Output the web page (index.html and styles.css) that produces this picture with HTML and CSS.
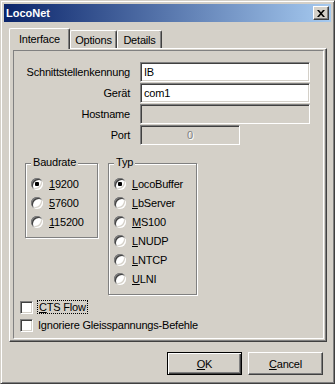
FILE: index.html
```html
<!DOCTYPE html>
<html lang="de">
<head>
    <meta charset="UTF-8">
    <title>LocoNet</title>
    <link rel="stylesheet" href="styles.css">
</head>
<body>
    <div class="window">
        <div class="titlebar">
            <span class="title">LocoNet</span>
            <span class="close-btn">
                <svg width="8" height="7" viewBox="0 0 8 7"><path d="M0 0h2l2 2.2 2-2.2h2l-3 3.5 3 3.5h-2l-2-2.2-2 2.2h-2l3-3.5z" fill="#000"/></svg>
            </span>
        </div>

        <div class="tab-strip">
            <div class="tab active">Interface</div>
            <div class="tab">Options</div>
            <div class="tab">Details</div>
        </div>
        <div class="tab-page">
            <div class="page-inner">
                <div class="fields">
                    <label>Schnittstellenkennung</label>
                    <div class="field">IB</div>
                    <label>Gerät</label>
                    <div class="field">com1</div>
                    <label>Hostname</label>
                    <div class="field disabled"></div>
                    <label>Port</label>
                    <div class="field disabled port">0</div>
                </div>

                <div class="groups">
                    <div class="group baud">
                        <span class="group-title">Baudrate</span>
                        <div class="option"><span class="radio checked"></span><span><u>1</u>9200</span></div>
                        <div class="option"><span class="radio"></span><span><u>5</u>7600</span></div>
                        <div class="option"><span class="radio"></span><span><u>1</u>15200</span></div>
                    </div>
                    <div class="group typ">
                        <span class="group-title">Typ</span>
                        <div class="option"><span class="radio checked"></span><span><u>L</u>ocoBuffer</span></div>
                        <div class="option"><span class="radio"></span><span><u>L</u>bServer</span></div>
                        <div class="option"><span class="radio"></span><span><u>M</u>S100</span></div>
                        <div class="option"><span class="radio"></span><span><u>L</u>NUDP</span></div>
                        <div class="option"><span class="radio"></span><span><u>L</u>NTCP</span></div>
                        <div class="option"><span class="radio"></span><span><u>U</u>LNI</span></div>
                    </div>
                </div>

                <div class="checks">
                    <div class="check-row"><span class="checkbox"></span><span class="focus"><u>C</u>TS Flow</span></div>
                    <div class="check-row"><span class="checkbox"></span><span>Ignoriere Gleisspannungs-Befehle</span></div>
                </div>
            </div>
        </div>

        <div class="buttons">
            <div class="button default"><u>O</u>K</div>
            <div class="button"><u>C</u>ancel</div>
        </div>
    </div>
</body>
</html>
```

FILE: styles.css
```css
body {
    margin: 0;
    padding: 0;
    background-color: #d4d0c8;
    font-family: "Liberation Sans", Arial, sans-serif;
    font-size: 11px;
    letter-spacing: -0.2px;
    color: #000;
}
u {
    text-decoration: underline;
    text-underline-offset: 1px;
}
.window {
    width: 335px;
    height: 384px;
    box-sizing: border-box;
    background-color: #d4d0c8;
    border: 1px solid;
    border-color: #d4d0c8 #404040 #404040 #d4d0c8;
    box-shadow: inset 1px 1px #fff, inset -1px -1px #808080;
    padding: 3px;
}
.titlebar {
    height: 18px;
    display: flex;
    align-items: center;
    justify-content: space-between;
    padding: 0 2px 0 2px;
    background: linear-gradient(to right, #0a246a, #a6caf0);
}
.title {
    color: #fff;
    font-weight: bold;
    letter-spacing: 0;
}
.close-btn {
    width: 16px;
    height: 14px;
    box-sizing: border-box;
    display: flex;
    align-items: center;
    justify-content: center;
    background-color: #d4d0c8;
    border: 1px solid;
    border-color: #fff #404040 #404040 #fff;
    box-shadow: inset -1px -1px #808080;
}
.tab-strip {
    display: flex;
    align-items: flex-end;
    height: 20px;
    margin: 6px 0 0 5px;
    position: relative;
    z-index: 1;
}
.tab {
    height: 18px;
    box-sizing: border-box;
    display: flex;
    align-items: center;
    justify-content: center;
    border: 1px solid;
    border-bottom: none;
    border-color: #fff #404040 #fff #fff;
    border-radius: 2px 2px 0 0;
    box-shadow: inset -1px 0 #808080;
}
.tab.active {
    height: 21px;
    width: 61px;
    margin-bottom: -1px;
    background-color: #d4d0c8;
    padding-bottom: 1px;
}
.tab:nth-child(2) {
    width: 47px;
}
.tab:nth-child(3) {
    width: 45px;
}
.tab-page {
    height: 294px;
    width: 318px;
    margin-left: 5px;
    box-sizing: border-box;
    display: flex;
    flex-direction: column;
    border: 1px solid;
    border-color: #fff #404040 #404040 #fff;
    box-shadow: inset -1px -1px #808080;
}
.page-inner {
    flex: 1;
    margin: 1px 2px 2px 3px;
    border: 1px solid;
    border-color: #808080 #fff #fff #808080;
    padding-top: 11px;
}
.fields {
    display: grid;
    grid-template-columns: 116px 170px;
    grid-auto-rows: 20px;
    row-gap: 1px;
    column-gap: 10px;
    align-items: center;
}
.fields label {
    text-align: right;
}
.field {
    height: 20px;
    box-sizing: border-box;
    border: 1px solid;
    border-color: #808080 #fff #fff #808080;
    box-shadow: inset 1px 1px #404040, inset -1px -1px #d4d0c8;
    background-color: #fff;
    padding: 0 3px;
    line-height: 18px;
}
.field.disabled {
    background-color: #d4d0c8;
}
.field.port {
    width: 100px;
    text-align: center;
    color: #808080;
    text-shadow: 1px 1px #fff;
}
.groups {
    display: flex;
    align-items: flex-start;
    gap: 10px;
    margin: 18px 0 0 11px;
}
.group {
    position: relative;
    border: 1px solid #808080;
    box-shadow: inset 1px 1px #fff, 1px 1px #fff;
    padding: 10px 0 6px 5px;
}
.group.baud {
    width: 66px;
}
.group.typ {
    width: 82px;
}
.group-title {
    position: absolute;
    top: -8px;
    left: 5px;
    padding: 0 2px;
    line-height: 13px;
    background-color: #d4d0c8;
}
.option {
    height: 19px;
    display: flex;
    align-items: center;
    gap: 6px;
}
.radio {
    width: 12px;
    height: 12px;
    border-radius: 50%;
    background-color: #fff;
    box-shadow: inset 1px 1px #808080, inset -1px -1px #fff, inset 2px 2px #404040, inset -2px -2px #d4d0c8;
    position: relative;
    flex-shrink: 0;
}
.radio.checked::after {
    content: "";
    position: absolute;
    left: 4px;
    top: 4px;
    width: 4px;
    height: 4px;
    border-radius: 1px;
    background-color: #000;
}
.checks {
    margin: 3px 0 0 6px;
}
.check-row {
    height: 18px;
    display: flex;
    align-items: center;
    gap: 5px;
}
.checkbox {
    width: 13px;
    height: 13px;
    box-sizing: border-box;
    background-color: #fff;
    border: 1px solid;
    border-color: #808080 #fff #fff #808080;
    box-shadow: inset 1px 1px #404040, inset -1px -1px #d4d0c8;
}
.focus {
    outline: 1px dotted #000;
    outline-offset: 0;
    padding: 0 1px;
    line-height: 12px;
}
.buttons {
    display: flex;
    justify-content: flex-end;
    gap: 6px;
    margin: 10px 8px 0 0;
}
.button {
    width: 75px;
    height: 23px;
    box-sizing: border-box;
    display: flex;
    align-items: center;
    justify-content: center;
    border: 1px solid;
    border-color: #fff #404040 #404040 #fff;
    box-shadow: inset -1px -1px #808080;
}
.button.default {
    border-color: #000;
    box-shadow: inset 1px 1px #fff, inset -1px -1px #404040, inset -2px -2px #808080;
}
```
